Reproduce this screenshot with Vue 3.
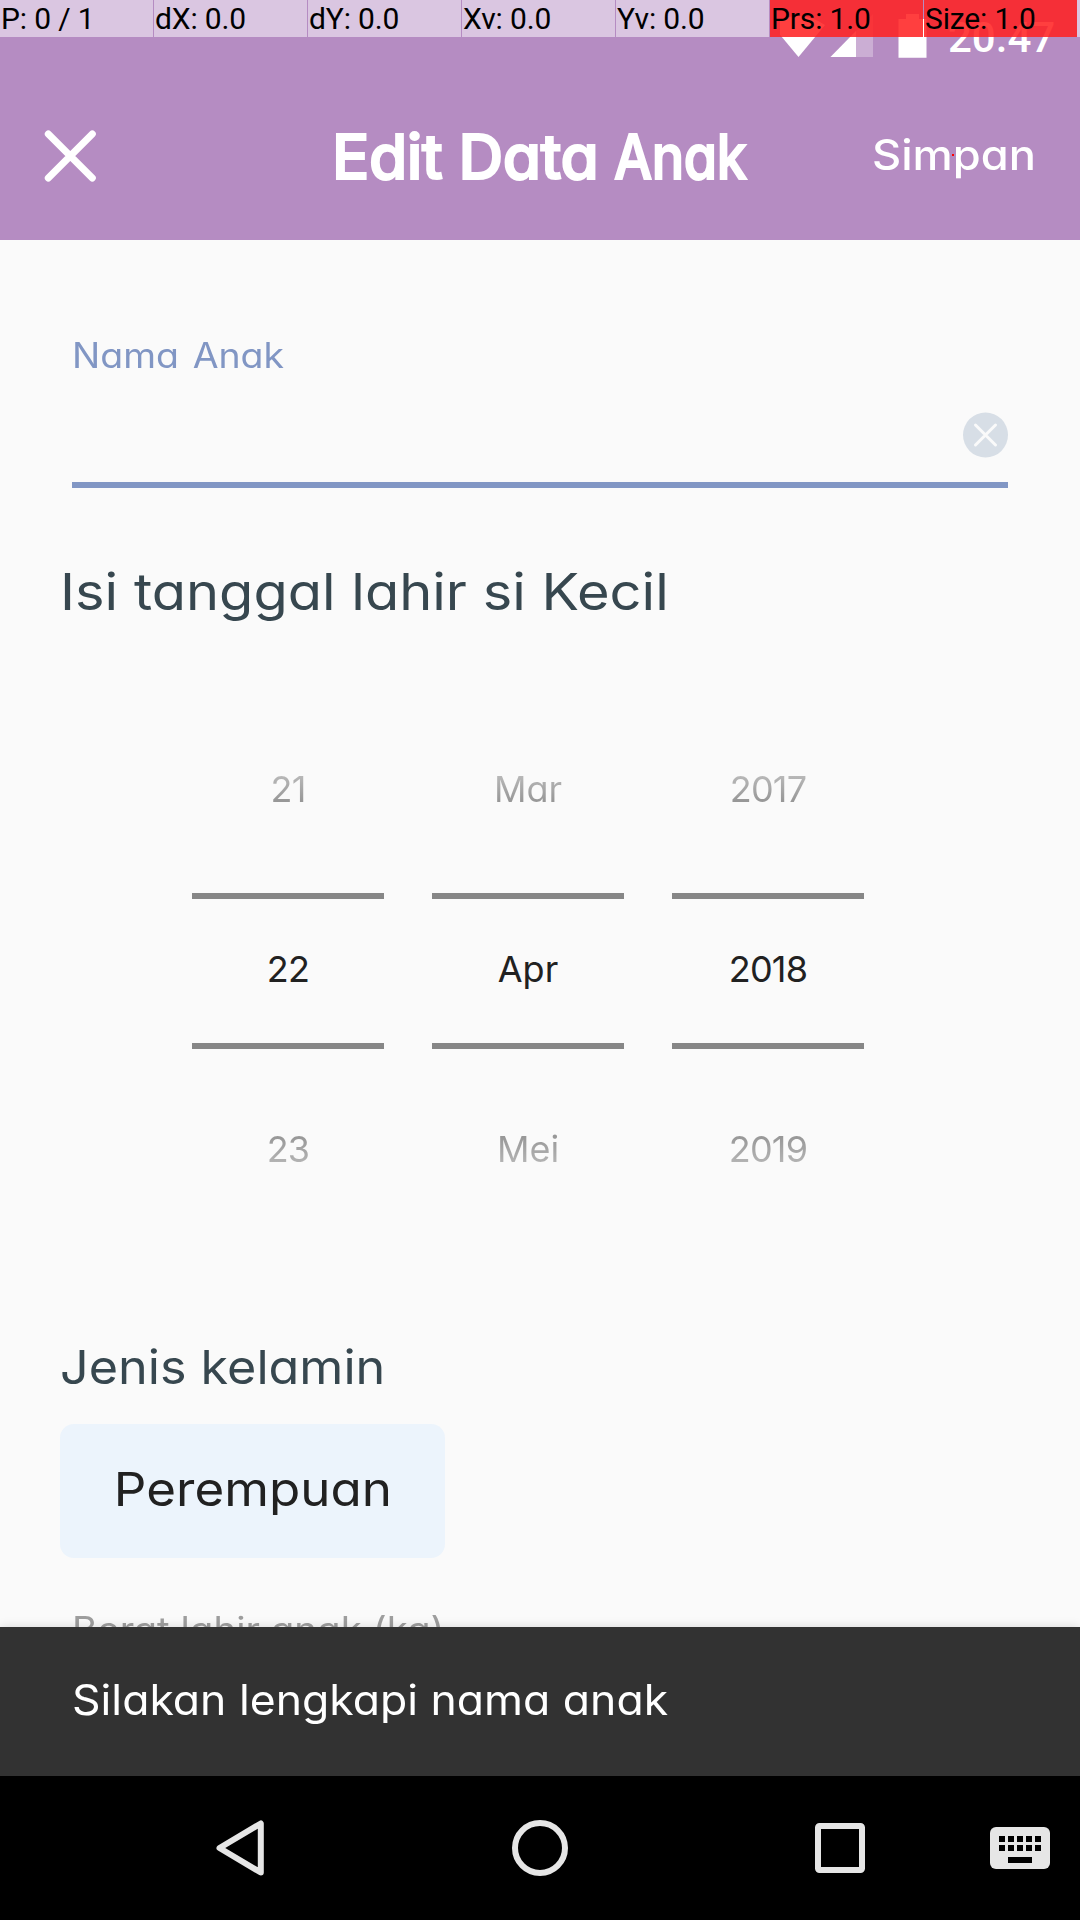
<script setup>
const pointerCells = [
  { text: 'P: 0 / 1' },
  { text: 'dX: 0.0' },
  { text: 'dY: 0.0' },
  { text: 'Xv: 0.0' },
  { text: 'Yv: 0.0' },
  { text: 'Prs: 1.0', hot: true },
  { text: 'Size: 1.0', hot: true },
]
const wheels = [
  { name: 'day', values: ['21', '22', '23'] },
  { name: 'month', values: ['Mar', 'Apr', 'Mei'] },
  { name: 'year', values: ['2017', '2018', '2019'] },
]
const keys = [9, 18, 27, 36, 45]
</script>

<template>
  <div class="screen">
    <header class="header">
      <div class="status">
        <svg class="status-icons" width="160" height="72" viewBox="780 0 160 72">
          <path d="M798.5 57 L772 25 Q798 7 825 25 Z" fill="#fff" />
          <path d="M830.5 57 L873 14 V57 Z" fill="#fff" fill-opacity=".3" />
          <path d="M830.5 57 L856 31 V57 Z" fill="#fff" />
          <path d="M898.5 57.7 V19 H906 V14 H919 V19 H926.5 V57.7 Z" fill="#fff" />
        </svg>
        <span class="clock">20.47</span>
      </div>
      <div class="toolbar">
        <svg class="close" width="52" height="52" viewBox="0 0 52 52">
          <path d="M4.3 4 L48.3 48 M48.3 4 L4.3 48" stroke="#fff" stroke-width="7" stroke-linecap="round" />
        </svg>
        <h1 class="title">Edit Data <span class="title-end">Anak</span></h1>
        <span class="save">Simpan</span>
      </div>
      <div class="pointer-bar">
        <span v-for="c in pointerCells" :key="c.text" class="cell" :class="{ hot: c.hot }">{{ c.text }}</span>
        <span class="cell rest"></span>
      </div>
      <i class="touch-dot"></i>
    </header>

    <main class="form">
      <section class="field">
        <label class="label">Nama Anak</label>
        <div class="input">
          <svg width="46" height="46" viewBox="0 0 46 46">
            <circle cx="23.5" cy="23" r="22.5" fill="#d7dee6" />
            <path d="M13.5 13 L33.5 33 M33.5 13 L13.5 33" stroke="#fafafa" stroke-width="3" stroke-linecap="round" />
          </svg>
        </div>
      </section>
      <h2 class="birth">Isi tanggal lahir si Kecil</h2>
      <div class="picker">
        <div v-for="w in wheels" :key="w.name" class="wheel" :class="w.name">
          <span class="value before">{{ w.values[0] }}</span>
          <span class="value current">{{ w.values[1] }}</span>
          <span class="value after">{{ w.values[2] }}</span>
        </div>
      </div>
      <h3 class="gender">Jenis kelamin</h3>
      <button class="choice"><span>Perempuan</span></button>
      <p class="weight">Berat lahir anak (kg)</p>
    </main>

    <div class="snackbar"><span>Silakan lengkapi nama anak</span></div>

    <nav class="nav">
      <svg width="1080" height="144" viewBox="0 0 1080 144">
        <g fill="none" stroke="#e6e6e6" stroke-width="6" stroke-linejoin="round">
          <path d="M219.5 72 L260.8 47.5 V96.5 Z" />
          <circle cx="540" cy="72" r="25" />
          <rect x="818" y="50" width="44" height="44" rx="1.5" />
        </g>
        <g transform="translate(990 51)">
          <rect width="60" height="42" rx="6" fill="#e6e6e6" />
          <template v-for="x in keys" :key="x">
            <rect :x="x" y="9" width="6" height="6" />
            <rect :x="x" y="18" width="6" height="6" />
          </template>
          <rect x="18" y="30" width="24" height="6" />
        </g>
      </svg>
    </nav>
  </div>
</template>

<style>
body {
  margin: 0;
}
</style>

<style scoped>
.screen {
  width: 1080px;
  height: 1920px;
  display: flex;
  flex-direction: column;
  background: #fafafa;
  overflow: hidden;
  font-family: Inter, "Open Sans", sans-serif;
  font-feature-settings: "cv11", "ss03";
  white-space: nowrap;
}
.header {
  position: relative;
  height: 240px;
  flex: none;
  background: #b58cc2;
  color: #fff;
}
.status {
  height: 72px;
  display: flex;
  justify-content: flex-end;
  padding-right: 26px;
}
.status-icons {
  margin-right: 8px;
}
.clock {
  width: 106px;
  font: 500 42px/76px Roboto, sans-serif;
}
.toolbar {
  height: 168px;
  display: flex;
  align-items: flex-start;
}
.close {
  margin: 58px 0 0 44px;
  fill: none;
}
.title {
  margin: 47px 0 0 236px;
  width: 416px;
  font-size: 62px;
  line-height: 76px;
  font-weight: 500;
  -webkit-text-stroke: 2px #fff;
  letter-spacing: -0.5px;
}
.title-end {
  display: inline-block;
  transform: scaleX(0.87);
  transform-origin: left;
}
.save {
  margin: 57px 0 0 124px;
  font-size: 42px;
  line-height: 52px;
  font-weight: 500;
  transform: scaleX(1.077);
  transform-origin: left;
}
.pointer-bar {
  position: absolute;
  top: 0;
  left: 0;
  display: flex;
  gap: 1px;
}
.cell {
  width: 153px;
  height: 37px;
  box-sizing: border-box;
  padding-left: 1px;
  background: rgba(255, 255, 255, 0.5);
  color: #000;
  font: 400 30px/37px Roboto, sans-serif;
  letter-spacing: -0.15px;
}
.cell.hot {
  background: rgba(255, 32, 32, 0.86);
}
.cell.rest {
  width: 3px;
  margin-left: -1px;
  padding: 0;
}
.touch-dot {
  position: absolute;
  left: 952px;
  top: 154px;
  width: 2px;
  height: 2px;
  background: #f00;
}
.form {
  height: 1387px;
  flex: none;
  overflow: hidden;
  display: flex;
  flex-direction: column;
  align-items: flex-start;
}
.form > * {
  flex: none;
}
.field {
  width: 936px;
  margin-left: 72px;
  padding-top: 91px;
  border-bottom: 6px solid #8196c4;
}
.label {
  display: block;
  font-size: 35px;
  line-height: 48px;
  color: #8196c4;
  word-spacing: 3px;
  transform: scaleX(1.07);
  transform-origin: left;
}
.input {
  height: 103px;
  box-sizing: border-box;
  display: flex;
  justify-content: flex-end;
  padding-top: 8px;
  align-items: center;
}
.birth {
  margin: 69px 0 0 60px;
  font-size: 51px;
  line-height: 70px;
  font-weight: 400;
  color: #37474f;
  transform: scaleX(1.098);
  transform-origin: left;
}
.picker {
  margin: 92px 0 0 192px;
  display: flex;
  gap: 48px;
}
.wheel {
  width: 192px;
  display: flex;
  flex-direction: column;
  text-align: center;
  font-size: 36px;
}
.year,
.day {
  letter-spacing: -0.8px;
}
.value {
  color: transparent;
  background-clip: text;
  -webkit-background-clip: text;
}
.before {
  padding-bottom: 34px;
  line-height: 140px;
  background-image: linear-gradient(#b8b8b8 57px, #969696 83px);
}
.current {
  background: none;
  color: #212121;
  border: solid #868686;
  border-width: 6px 0;
  padding-bottom: 4px;
  line-height: 140px;
}
.after {
  line-height: 200px;
  background-image: linear-gradient(#969696 86px, #b4b4b4 114px);
}
.gender {
  margin: 86px 0 0 60px;
  font-size: 47px;
  line-height: 64px;
  font-weight: 400;
  color: #37474f;
  transform: scaleX(1.07);
  transform-origin: left;
}
.choice {
  margin: 25px 0 0 60px;
  width: 385px;
  height: 134px;
  border: 0;
  border-radius: 14px;
  padding: 0 0 4px;
  background: #ecf4fc;
  font: inherit;
  font-feature-settings: inherit;
  font-size: 47px;
  line-height: 64px;
  color: #212121;
}
.choice span {
  display: inline-block;
  transform: scaleX(1.087);
}
.weight {
  margin: 47px 0 0 72px;
  font-size: 35px;
  line-height: 48px;
  color: #9e9e9e;
  transform: scaleX(1.1);
  transform-origin: left;
}
.snackbar {
  position: relative;
  height: 149px;
  flex: none;
  padding-left: 72px;
  background: #323232;
  box-shadow: 0 0 10px rgba(0, 0, 0, 0.14);
  font-size: 42px;
  line-height: 146px;
  color: #fff;
}
.snackbar span {
  display: inline-block;
  transform: scaleX(1.06);
  transform-origin: left;
}
.nav {
  position: relative;
  height: 144px;
  flex: none;
  background: #000;
}
.nav svg {
  display: block;
}
</style>
